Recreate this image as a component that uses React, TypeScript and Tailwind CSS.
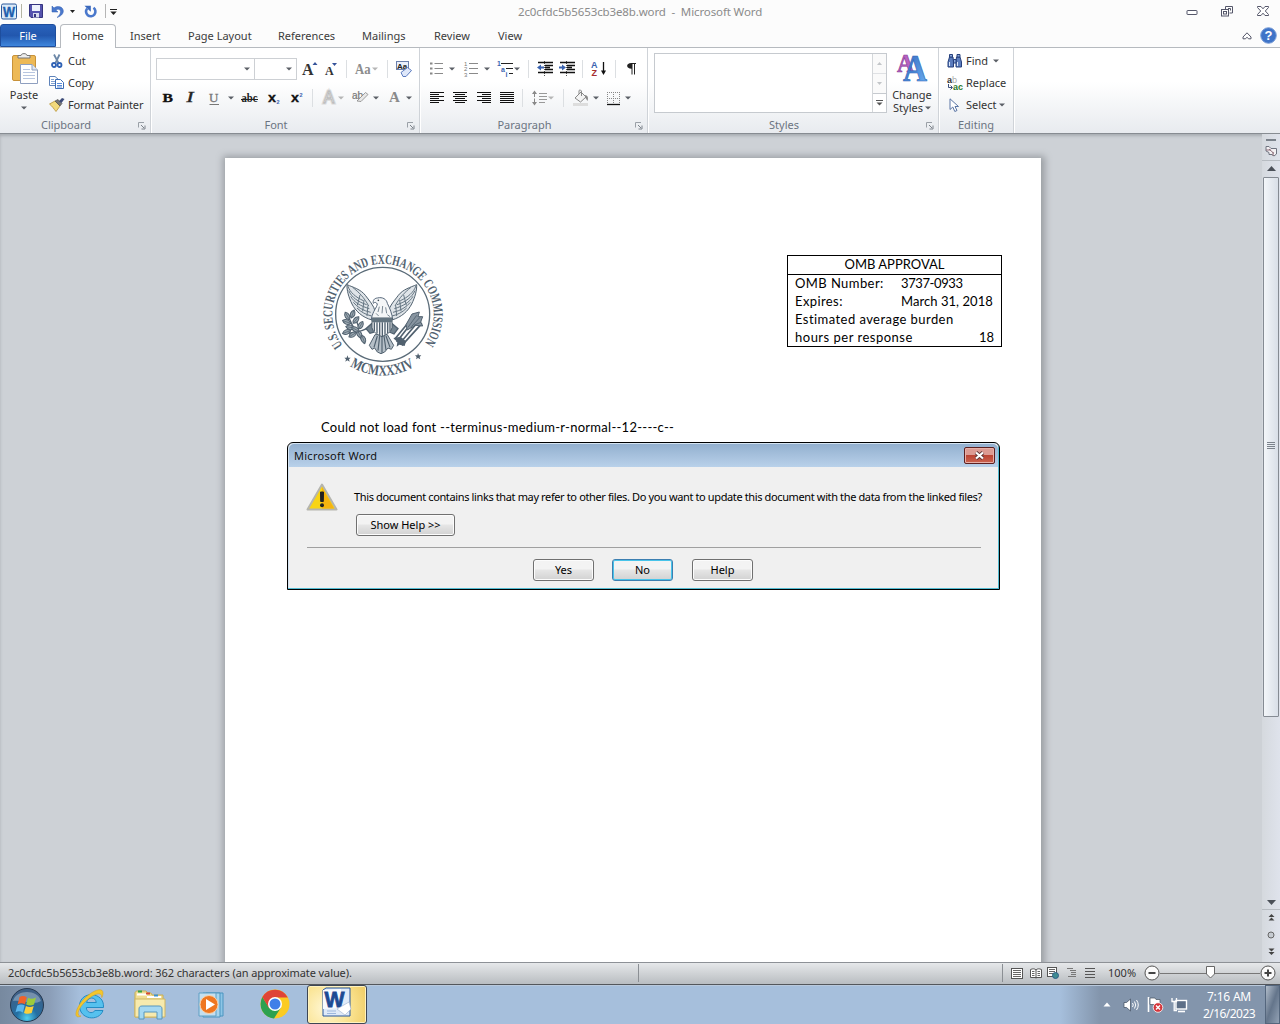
import React from "react";

type IconProps = { w: number; h: number; c?: string; children: React.ReactNode };

function Icon({ w, h, c = "", children }: IconProps) {
  return (
    <svg width={w} height={h} viewBox={`0 0 ${w} ${h}`} fill="none" className={`shrink-0 overflow-visible ${c}`}>
      {children}
    </svg>
  );
}

function Arrow({ c = "", fill = "#5b5f66" }: { c?: string; fill?: string }) {
  return (
    <Icon w={6} h={4} c={c}>
      <path d="M0 0.5H6L3 3.5Z" fill={fill} />
    </Icon>
  );
}

function Sep({ c = "" }: { c?: string }) {
  return <div className={`h-[18px] w-px shrink-0 bg-[#dcdfe2] ${c}`} />;
}

function Launcher({ c = "" }: { c?: string }) {
  return (
    <Icon w={8} h={8} c={c}>
      <path d="M0.5 5.5V0.5H6" stroke="#9aa0a7" />
      <path d="M3 3L6 6M7 3.5V7H3.5" stroke="#7c838b" />
    </Icon>
  );
}

function GroupLabel({ label, launcher = true }: { label: string; launcher?: boolean }) {
  return (
    <div className={`relative flex h-4 items-center justify-center text-[11px] text-[#6b7481] ${launcher ? "pr-[18px]" : ""}`}>
      <span>{label}</span>
      {launcher && <Launcher c="absolute top-[5px] right-[4px]" />}
    </div>
  );
}

const groupClass =
  "flex h-[85px] shrink-0 flex-col justify-between border-r border-[#cfd3d8] shadow-[1px_0_0_#fff]";

function TitleBar() {
  return (
    <div className="relative flex h-6 items-center bg-[#fcfcfc] pb-0.5">
      <Icon w={16} h={17} c="ml-px">
        <rect x="0.5" y="1" width="15" height="15" rx="1.5" fill="#dcebf8" stroke="#2c5a9c" />
        <text x="2" y="13.5" fontFamily="Liberation Sans" fontWeight="bold" fontSize="14" textLength="12" lengthAdjust="spacingAndGlyphs" fill="#1d5fae" stroke="#1d5fae" strokeWidth="0.4">W</text>
      </Icon>
      <div className="ml-1 h-3.5 w-px bg-[#b5b5a5]" />
      <Icon w={14} h={14} c="ml-[7px]">
        <path d="M0.5 0.5H13.5V13.5H2L0.5 12Z" fill="#5553ad" stroke="#35347f" />
        <rect x="3" y="1" width="8" height="6" fill="#eef2fb" />
        <rect x="4" y="9" width="6" height="4.5" fill="#d8dced" />
        <rect x="5" y="10" width="2" height="3" fill="#35347f" />
      </Icon>
      <Icon w={13} h={13} c="ml-2">
        <path d="M1 1V7H7L4.8 4.9C7 3.6 9.5 4 9.5 6.5C9.5 9 8 10.8 6 12.5C9.5 11.5 12.5 9 12.3 5.8C12 1.5 6.5 0.3 3 3Z" fill="#4a78cc" stroke="#2f5cb0" strokeWidth="0.5" />
      </Icon>
      <Icon w={5} h={3} c="ml-[6px]"><path d="M0 0H5L2.5 3Z" fill="#222" /></Icon>
      <Icon w={13} h={13} c="ml-[9px]">
        <path d="M3.2 3.5A4.7 4.7 0 1 0 9.5 2.8" stroke="#4a78cc" strokeWidth="2.6" />
        <path d="M0.5 0.8H6.8V6.8L4.8 4.9Z" fill="#3a68bc" />
      </Icon>
      <div className="ml-2 h-3.5 w-px bg-[#b5b5b5]" />
      <Icon w={7} h={6} c="ml-[4px] mt-0.5">
        <path d="M0 0.5H7" stroke="#222" /><path d="M0.3 2.5H6.7L3.5 6Z" fill="#222" />
      </Icon>
      <div className="absolute top-[4px] left-[518px] w-[246px] whitespace-pre text-[11.5px] leading-4 tracking-[-0.12px] text-[#8b8b8b]">
        2c0cfdc5b5653cb3e8b.word  -  Microsoft Word
      </div>
      <div className="mr-[11px] ml-auto flex items-center">
        <Icon w={12} h={6} c="mt-1"><rect x="1" y="0.5" width="10" height="4" rx="0.5" fill="#fff" stroke="#55576a" /></Icon>
        <Icon w={12} h={11} c="ml-[23px]">
          <path d="M4.5 3V0.5H11.5V7H8.5" stroke="#55576a" />
          <path d="M7 2.5H9.5V4.5" stroke="#55576a" />
          <rect x="0.5" y="3.5" width="7" height="6.5" fill="#fff" stroke="#55576a" />
          <rect x="2.5" y="5.5" width="3" height="2.5" stroke="#55576a" />
        </Icon>
        <Icon w={12} h={10} c="ml-6">
          <path d="M0.5 0.5H4L6 2.8L8 0.5H11.5V1.5L8.3 5L11.5 8.5V9.5H8L6 7.2L4 9.5H0.5V8.5L3.7 5L0.5 1.5Z" fill="#fff" stroke="#55576a" />
        </Icon>
      </div>
    </div>
  );
}

function Tabs() {
  const tab = "whitespace-nowrap pt-[3px] text-[11px] leading-[18px] text-[#3b3b3b]";
  return (
    <div className="relative flex h-6 border-b border-[#b6babf] bg-[#fcfcfc]">
      <div className="flex h-[23px] w-14 justify-center rounded-t-[3px] border border-[#1e4e9d] bg-linear-to-b from-[#2a63bb] via-[#2257ae] to-[#3f86dc] pt-px text-[11px] leading-5 text-white">
        File
      </div>
      <div className="ml-1 flex h-6 w-14 justify-center rounded-t-[4px] border border-b-0 border-[#b6babf] bg-white pt-[2px] text-[11px] leading-[18px] text-[#3b3b3b]">
        Home
      </div>
      <div className={`ml-[14px] w-[58px] ${tab}`}>Insert</div>
      <div className={`w-[90px] ${tab}`}>Page Layout</div>
      <div className={`w-[84px] ${tab}`}>References</div>
      <div className={`w-[72px] ${tab}`}>Mailings</div>
      <div className={`w-16 ${tab}`}>Review</div>
      <div className={tab}>View</div>
      <div className="mr-[3px] ml-auto flex items-center">
        <Icon w={10} h={8} c="mr-[8px]">
          <path d="M1 5L5 0.8L9 5V6.8H6.5L5 5.2L3.5 6.8H1Z" fill="#fff" stroke="#55576a" />
        </Icon>
        <Icon w={17} h={17} c="-mt-px">
          <circle cx="8.5" cy="8.5" r="7.8" fill="#3f74c8" stroke="#7c9fd8" />
          <text x="8.5" y="13" textAnchor="middle" fontFamily="Liberation Sans" fontWeight="bold" fontSize="13" fill="#fff">?</text>
        </Icon>
      </div>
    </div>
  );
}

function ClipboardGroup() {
  return (
    <div className={`w-[151px] ${groupClass}`}>
      <div className="flex">
        <div className="ml-[10px] flex w-7 flex-col items-center pt-[5px]">
          <Icon w={29} h={31}>
            <rect x="2.5" y="2.5" width="23" height="25" rx="1.5" fill="#edb956" stroke="#c8923a" />
            <path d="M8 5V2.5H11C11 0 17 0 17 2.5H20V5Z" fill="#eee" stroke="#777" />
            <path d="M10.5 11.5H22L27.5 17V30.5H10.5Z" fill="#fff" stroke="#8e9fbf" />
            <path d="M22 11.5V17H27.5" fill="#dde6f5" stroke="#8e9fbf" />
            <path d="M13 16.5H20M13 19.5H25M13 22.5H25M13 25.5H25" stroke="#b8c6e0" />
          </Icon>
          <span className="mt-[3px] text-[11px] leading-4 text-[#333]">Paste</span>
          <Arrow c="mt-[3px]" />
        </div>
        <div className="ml-[11px] flex flex-col text-[11px] leading-[22px] text-[#333]">
          <div className="mt-[2px] flex h-[22px] items-center">
            <Icon w={12} h={14} c="mr-[5px] ml-0.5">
              <path d="M3 0.5L7.5 9M8.5 0.5L4.5 9" stroke="#6d88a8" strokeWidth="1.8" />
              <circle cx="3" cy="11" r="2" stroke="#2f62b5" strokeWidth="1.8" />
              <circle cx="8.5" cy="11" r="2" stroke="#2f62b5" strokeWidth="1.8" />
            </Icon>
            Cut
          </div>
          <div className="flex h-[22px] items-center">
            <Icon w={16} h={14} c="mr-[3px]">
              <path d="M0.5 0.5H6L9.5 3.5V9.5H0.5Z" fill="#fff" stroke="#5f83ba" />
              <path d="M2 3.5H5M2 5.5H6M2 7.5H6" stroke="#7fa0d0" />
              <path d="M6.5 3.5H11.5L14.5 6.5V12.5H6.5Z" fill="#fff" stroke="#3b6cb4" />
              <path d="M8 7.5H13M8 9.5H13M8 11H13" stroke="#5b8cd8" />
            </Icon>
            Copy
          </div>
          <div className="flex h-[22px] items-center tracking-[-0.15px]">
            <Icon w={16} h={14} c="mr-[3px]">
              <path d="M0.5 6L6 3L11 8L7 13.5C5 11 3 8 0.5 6Z" fill="#f3da7c" stroke="#b8943a" strokeWidth="0.8" />
              <path d="M6 3L9 1.5L13 5.5L11 8Z" fill="#777" stroke="#444" strokeWidth="0.6" />
              <path d="M10 3.2L13 0L15.5 1L12.5 5Z" fill="#3d4b78" />
            </Icon>
            Format Painter
          </div>
        </div>
      </div>
      <GroupLabel label="Clipboard" />
    </div>
  );
}

function Glyph({ w, c, children }: { w: number; c: string; children: React.ReactNode }) {
  return (
    <Icon w={w} h={18} c={c}>
      {children}
    </Icon>
  );
}

const serif = { fontFamily: "Liberation Serif", fontWeight: "bold" };

function FontGroup() {
  return (
    <div className={`w-[269px] ${groupClass}`}>
      <div>
        <div className="mt-[10px] ml-[5px] flex h-[22px] items-center">
          <div className="flex h-[22px] w-[99px] items-center justify-end border border-[#cdd0d4] bg-white pr-1"><Arrow /></div>
          <div className="flex h-[22px] w-[42px] items-center justify-end border border-l-0 border-[#cdd0d4] bg-white pr-1"><Arrow /></div>
          <Glyph w={16} c="ml-[5px]">
            <text x="0" y="15" {...serif} fontSize="16" fill="#333">A</text>
            <path d="M10.5 5L13 2L15.5 5Z" fill="#35539a" />
          </Glyph>
          <Glyph w={13} c="ml-[7px]">
            <text x="0" y="15" {...serif} fontSize="12" fill="#333">A</text>
            <path d="M7 3H12L9.5 6Z" fill="#35539a" />
          </Glyph>
          <Sep c="ml-[8px]" />
          <Glyph w={17} c="ml-2">
            <text x="0" y="14" fontFamily="Liberation Serif" fontSize="14" fontWeight="bold" textLength="15.5" lengthAdjust="spacingAndGlyphs" fill="#8d8d8d">Aa</text>
          </Glyph>
          <Arrow c="ml-0" fill="#b5b5b5" />
          <Sep c="ml-[9px]" />
          <Glyph w={17} c="ml-2">
            <rect x="0.5" y="1.5" width="12" height="8" fill="#eaf0fb" stroke="#6a80ad" />
            <text x="1" y="8.5" fontFamily="Liberation Sans" fontSize="8" fontWeight="bold" fill="#222">Aa</text>
            <path d="M5 12.5L11.5 7.5L15.5 10.5L10 16.5H7Z" fill="#dfe8fa" stroke="#5c7cc0" />
          </Glyph>
        </div>
        <div className="mt-[9px] flex h-[18px] items-center">
          <Glyph w={11} c="ml-[11px]"><text x="0.5" y="13" {...serif} fontSize="13.5" textLength="10.5" lengthAdjust="spacingAndGlyphs" fill="#111" stroke="#111" strokeWidth="0.3">B</text></Glyph>
          <Glyph w={11} c="ml-[12px]"><text x="1.5" y="13" fontFamily="Liberation Serif" fontStyle="italic" fontSize="14" textLength="7" lengthAdjust="spacingAndGlyphs" fill="#222" stroke="#222" strokeWidth="0.4">I</text></Glyph>
          <Glyph w={11} c="ml-[13px]"><text x="0" y="13" fontFamily="Liberation Serif" fontSize="13" fill="#777" stroke="#777" strokeWidth="0.3">U</text><path d="M0.5 15.5H10" stroke="#777" /></Glyph>
          <Arrow c="ml-[8px]" />
          <Glyph w={18} c="ml-[7px]"><text x="0.5" y="13" {...serif} fontSize="12" textLength="16" lengthAdjust="spacingAndGlyphs" fill="#222">abc</text><path d="M0 10.5H17" stroke="#222" /></Glyph>
          <Glyph w={14} c="ml-2"><text x="1" y="13" fontFamily="Liberation Sans" fontWeight="bold" fontSize="12" textLength="8" lengthAdjust="spacingAndGlyphs" fill="#111" stroke="#111" strokeWidth="0.3">x</text><text x="9.5" y="15" fontFamily="Liberation Sans" fontWeight="bold" fontSize="5.5" fill="#3a63b0">2</text></Glyph>
          <Glyph w={14} c="ml-[9px]"><text x="1" y="13" fontFamily="Liberation Sans" fontWeight="bold" fontSize="12" textLength="8" lengthAdjust="spacingAndGlyphs" fill="#111" stroke="#111" strokeWidth="0.3">x</text><text x="9.5" y="7.5" fontFamily="Liberation Sans" fontWeight="bold" fontSize="5.5" fill="#3a63b0">2</text></Glyph>
          <Sep c="ml-2" />
          <Glyph w={16} c="ml-[9px]"><text x="1.5" y="14" fontFamily="Liberation Sans" fontSize="16" fill="#fff" stroke="#dcdcdc" strokeWidth="3">A</text><text x="1.5" y="14" fontFamily="Liberation Sans" fontSize="16" fill="#fff" stroke="#b5b5b5" strokeWidth="0.8">A</text></Glyph>
          <Arrow c="ml-0" fill="#b5b5b5" />
          <Glyph w={17} c="ml-2"><text x="0" y="9.5" fontFamily="Liberation Sans" fontSize="10" fill="#777" stroke="#777" strokeWidth="0.2">ab</text><path d="M5 12L13.5 3.5L16 5.5L9 12.5Z" fill="#e8e8e8" stroke="#888" strokeWidth="0.8" /></Glyph>
          <Arrow c="ml-[4px]" />
          <Glyph w={12} c="ml-[10px]"><text x="0" y="12.5" {...serif} fontSize="15" fill="#8a8a8a">A</text></Glyph>
          <Arrow c="ml-[5px]" />
        </div>
      </div>
      <GroupLabel label="Font" />
    </div>
  );
}

function Align({ d, c }: { d: string; c: string }) {
  return <Icon w={15} h={12} c={c}><path d={d} stroke="#111" /></Icon>;
}

function ParagraphGroup() {
  return (
    <div className={`w-[228px] ${groupClass}`}>
      <div>
        <div className="mt-3 ml-[10px] flex h-[18px] items-center">
          <Glyph w={14} c=""><path d="M4.5 3.5H13M4.5 8.5H13M4.5 13.5H13" stroke="#8a8a8a" /><path d="M0 3.5H2.5M0 8.5H2.5M0 13.5H2.5" stroke="#888" strokeWidth="2.2" /></Glyph>
          <Arrow c="ml-[5px]" />
          <Glyph w={14} c="ml-[9px]"><path d="M5 3.5H14M5 8.5H14M5 13.5H14" stroke="#8a8a8a" /><g fontFamily="Liberation Sans" fontSize="6" fill="#777"><text x="0" y="5.5">1</text><text x="0" y="11">2</text><text x="0" y="16.5">3</text></g></Glyph>
          <Arrow c="ml-[6px]" />
          <Glyph w={17} c="ml-[7px]"><path d="M4 3.5H16M9 8.5H16M12 13.5H16" stroke="#222" /><g fontFamily="Liberation Sans" fontSize="7" fontWeight="bold" fill="#3a63b0"><text x="0" y="6">1</text><text x="4" y="11.5">a</text><text x="8.5" y="17">i</text></g></Glyph>
          <Arrow />
          <Sep c="ml-[8px]" />
          <Glyph w={16} c="ml-[8px]"><path d="M7.5 1V16" stroke="#555" strokeDasharray="1 1" /><path d="M1 2.5H16M8 5.5H16M8 7.5H13M8 9.5H16M1 12.5H16" stroke="#111" strokeWidth="1.3" /><path d="M0 7.5L4 4.5V6.5H7V8.5H4V10.5Z" fill="#3a63b0" /></Glyph>
          <Glyph w={16} c="ml-[6px]"><path d="M7.5 1V16" stroke="#555" strokeDasharray="1 1" /><path d="M1 2.5H16M8 5.5H16M8 7.5H13M8 9.5H16M1 12.5H16" stroke="#111" strokeWidth="1.3" /><path d="M7 7.5L3 4.5V6.5H0V8.5H3V10.5Z" fill="#3a63b0" /></Glyph>
          <Sep c="ml-[7px]" />
          <Glyph w={15} c="ml-2"><g fontFamily="Liberation Sans" fontSize="9" fontWeight="bold"><text x="0" y="8" fill="#3a63b0">A</text><text x="0.5" y="16" fill="#a62f2f">Z</text></g><path d="M12.5 2V13" stroke="#111" strokeWidth="1.3" /><path d="M10 10.5H15L12.5 15Z" fill="#111" /></Glyph>
          <Sep c="ml-[9px]" />
          <Glyph w={11} c="ml-[10px]"><path d="M5.5 3.5H10M6 3V14.5M8.5 3V14.5" stroke="#222" /><path d="M6 3C-0.5 2.5 -0.5 9 6 8.7Z" fill="#222" /></Glyph>
        </div>
        <div className="mt-[11px] ml-[9px] flex h-[18px] items-center">
          <Align c="" d="M1 0.5H15M1 2.5H10M1 4.5H15M1 6.5H10M1 8.5H15M1 10.5H10" />
          <Align c="ml-[9px]" d="M0 0.5H14M2 2.5H12M0 4.5H14M2 6.5H12M0 8.5H14M2 10.5H12" />
          <Align c="ml-[9px]" d="M0 0.5H14M5 2.5H14M0 4.5H14M5 6.5H14M0 8.5H14M5 10.5H14" />
          <Align c="ml-2" d="M0 0.5H14M0 2.5H14M0 4.5H14M0 6.5H14M0 8.5H14M0 10.5H14" />
          <Sep c="ml-[7px]" />
          <Glyph w={15} c="ml-[9px]"><path d="M7 4.5H15M7 7.5H15M7 10.5H15M7 13.5H13" stroke="#999" /><path d="M2.5 3V15" stroke="#888" strokeDasharray="5 1.5" /><path d="M0 5L2.5 1.5L5 5ZM0 13L2.5 16.5L5 13Z" fill="#888" /></Glyph>
          <Arrow c="ml-px" fill="#b5b5b5" />
          <Sep c="ml-[9px]" />
          <Glyph w={16} c="ml-[9px]"><path d="M2 9L8 3L13 8L7.5 13Z" fill="#f3f3f3" stroke="#888" /><path d="M6 5V1.5C7 0.5 8.5 1 8.5 3V7" stroke="#888" /><path d="M12 6C15 6.5 15.5 9 14.5 12L12.5 9Z" fill="#888" /><path d="M0 15.5H15" stroke="#ddd" strokeWidth="3" /></Glyph>
          <Arrow c="ml-[4px]" />
          <Glyph w={14} c="ml-[8px]"><path d="M0.5 3V15M6.5 3V15M12.5 3V15M0 3.5H13M0 9.5H13" stroke="#888" strokeDasharray="1 1" /><path d="M0 15.5H13" stroke="#111" strokeWidth="1.3" /></Glyph>
          <Arrow c="ml-[4px]" />
        </div>
      </div>
      <GroupLabel label="Paragraph" />
    </div>
  );
}

function StylesGroup() {
  return (
    <div className={`w-[291px] ${groupClass}`}>
      <div className="flex">
        <div className="mt-[5px] ml-[6px] flex h-[60px] w-[233px] border border-[#c6cacf] bg-white">
          <div className="ml-auto flex w-[14px] flex-col border-l border-[#d4d7da]">
            <div className="flex h-5 items-center justify-center border-b border-[#dfe1e4] bg-[#fafafa]">
              <Icon w={5} h={3}><path d="M0 3H5L2.5 0Z" fill="#c2c5c8" /></Icon>
            </div>
            <div className="flex h-5 items-center justify-center border-b border-[#c6cacf] bg-[#fafafa]">
              <Icon w={5} h={3}><path d="M0 0H5L2.5 3Z" fill="#c2c5c8" /></Icon>
            </div>
            <div className="flex flex-1 items-center justify-center">
              <Icon w={7} h={6}><path d="M0 0.5H7" stroke="#555" /><path d="M0.5 2.5H6.5L3.5 5.5Z" fill="#555" /></Icon>
            </div>
          </div>
        </div>
        <div className="ml-[4px] flex w-[42px] flex-col items-center pt-[6px] text-[11px] leading-[13px] text-[#333]">
          <Icon w={30} h={28}>
            <defs>
              <linearGradient id="styleBlue" x1="0" y1="0" x2="1" y2="1"><stop offset="0.2" stopColor="#3c70c4" /><stop offset="1" stopColor="#6cb4f6" /></linearGradient>
            </defs>
            <text x="0" y="18" fontFamily="Liberation Serif" fontWeight="bold" fontSize="26" textLength="17" lengthAdjust="spacingAndGlyphs" fill="#b763c0" stroke="#8c3f9c" strokeWidth="0.7">A</text>
            <text x="6" y="27" fontFamily="Liberation Serif" fontWeight="bold" fontSize="37" textLength="24" lengthAdjust="spacingAndGlyphs" fill="url(#styleBlue)" stroke="#2e66b8" strokeWidth="0.7">A</text>
          </Icon>
          <span className="mt-[6px]">Change</span>
          <span className="flex items-center gap-[2px]">Styles<Arrow /></span>
        </div>
      </div>
      <GroupLabel label="Styles" />
    </div>
  );
}

function EditingGroup() {
  const row = "flex h-[22px] items-center";
  return (
    <div className={`w-[75px] ${groupClass}`}>
      <div className="mt-[2px] ml-2 text-[11px] text-[#333]">
        <div className={row}>
          <Icon w={16} h={14} c="mr-[3px]">
            <path d="M2.5 3L1 8V13H6.5V8L6 3ZM9.5 3L9 8V13H14.5V8L13 3Z" fill="#5b7cbd" stroke="#27407c" />
            <path d="M2.5 0.5H5.5V3H2.5ZM10 0.5H13V3H10ZM6.5 5.5H9V9H6.5Z" fill="#8da9dc" stroke="#27407c" />
            <path d="M2.5 8V12M10.5 8V12" stroke="#dbe7fb" />
          </Icon>
          Find<Arrow c="ml-[5px]" />
        </div>
        <div className={row}>
          <Icon w={17} h={15} c="mr-[2px]">
            <g fontFamily="Liberation Sans" fontWeight="bold" fontSize="9"><text x="0" y="6.5" fill="#333">a</text><text x="5" y="6.5" fill="#aaa" fontWeight="normal">b</text><text x="6" y="14" fill="#2a7a2a">ac</text></g>
            <path d="M1.5 8V11.5H5M3.5 9.5L5.5 11.5L3.5 13.5" stroke="#3a4f7a" />
          </Icon>
          Replace
        </div>
        <div className={row}>
          <Icon w={12} h={15} c="mr-[5px] ml-0.5">
            <path d="M1 0.8V11.5L3.8 9L5.8 13.5L8 12.5L6 8.5H9.5Z" fill="#fff" stroke="#5a75a5" />
          </Icon>
          <span className="w-[31px]">Select</span><Arrow c="ml-[2px]" />
        </div>
      </div>
      <GroupLabel label="Editing" launcher={false} />
    </div>
  );
}

function Ribbon() {
  return (
    <div className="flex h-[86px] border-b border-[#878c92] bg-linear-to-b from-white from-40% to-[#e8ebef]">
      <ClipboardGroup />
      <FontGroup />
      <ParagraphGroup />
      <StylesGroup />
      <EditingGroup />
    </div>
  );
}

const wingFeathers = [
  "M143 137C150 158 168 172 190 182",
  "M146 152C155 172 175 186 200 194",
  "M152 169C163 188 182 198 208 206",
  "M160 187C172 202 190 212 212 217",
  "M171 204C184 217 198 224 215 228",
  "M158 142C178 158 192 172 206 198",
  "M180 165L172 196M192 180L188 214M204 196L201 228",
];

function Wing() {
  return (
    <g>
      <path d="M141 134C140 150 146 172 156 192C166 212 186 232 216 240L226 216C222 196 206 180 196 166C182 148 160 142 141 134Z" fill="#dfe4e8" stroke="#4f606e" strokeWidth="3" />
      {wingFeathers.map((d) => <path key={d} d={d} stroke="#647582" strokeWidth="3" />)}
    </g>
  );
}

const leaves = [
  [142, 228, 60], [158, 222, 110], [140, 246, 20], [168, 240, 130], [150, 262, 10],
  [140, 276, 160], [158, 284, 150], [182, 256, 120], [178, 282, 60], [190, 298, 70], [166, 268, 30],
];

function Seal() {
  return (
    <svg width="160" height="150" viewBox="0 0 480 450" fill="none" className="mt-[82px] ml-[75px] shrink-0">
      <defs>
        <path id="sealTop" d="M128.5 316.5A152 152 0 1 1 370.5 315" />
        <path id="sealBottom" d="M150 378A184 184 0 0 0 346 378" />
      </defs>
      <circle cx="248" cy="223" r="141" stroke="#5a6b78" strokeWidth="4" />
      <g fontFamily="Liberation Serif" fontWeight="bold" fill="#51616f">
        <text fontSize="41" textLength="668" lengthAdjust="spacingAndGlyphs"><textPath href="#sealTop" textLength="668" lengthAdjust="spacingAndGlyphs">U.S. SECURITIES AND EXCHANGE COMMISSION</textPath></text>
        <text fontSize="45" textLength="204" lengthAdjust="spacingAndGlyphs"><textPath href="#sealBottom" textLength="204" lengthAdjust="spacingAndGlyphs">MCMXXXIV</textPath></text>
      </g>
      <path d="M142 346L145 353L152 353L147 358L149 365L142 361L136 365L138 358L133 353L140 353Z" fill="#51616f" />
      <path d="M354 339L357 346L364 346L359 351L361 358L354 354L348 358L350 351L345 346L352 346Z" fill="#51616f" />
      <Wing />
      <g transform="translate(491 0) scale(-1 1)"><Wing /></g>
      <path d="M214 236C220 210 230 204 232 192C228 186 224 186 220 190C218 182 222 175 232 174C248 170 260 178 262 190C270 205 276 222 278 238Z" fill="#f4f6f7" stroke="#56677a" strokeWidth="3" />
      <circle cx="235" cy="181" r="2.5" fill="#34424e" />
      <path d="M238 200L234 216M248 198L246 220M257 202L260 220M228 220L236 228M262 224L270 230" stroke="#7b8994" strokeWidth="3" />
      <path d="M225 284L208 316L216 328L224 324L232 336L243 341L254 336L264 324L274 328L281 316L262 284Z" fill="#b5bfc7" stroke="#51616f" strokeWidth="3" />
      <path d="M232 288L222 322M239 288L234 332M246 288V338M252 288L258 330M258 288L270 322" stroke="#4f606e" strokeWidth="3.5" />
      <path d="M216 250L198 266L210 280L222 276M275 250L294 266L282 282L268 276" fill="#73838f" stroke="#51616f" strokeWidth="4" />
      <path d="M216 234H276V262C274 276 262 282 246 290C230 282 218 276 216 262Z" fill="#f6f8f9" stroke="#4a5a67" strokeWidth="3" />
      <path d="M216 234H276V247H216Z" fill="#63747f" />
      <path d="M223 247V274M231 247V280M239 247V285M247 247V288M255 247V284M263 247V279M270 247V273" stroke="#51616f" strokeWidth="4" />
      <path d="M144 222C152 260 176 284 194 312M200 266C180 276 160 280 134 280M166 232L176 262" stroke="#51616f" strokeWidth="4" />
      {leaves.map(([x, y, r]) => (
        <g key={`${x}-${y}`} transform={`translate(${x} ${y}) rotate(${r})`}>
          <path d="M-13 0C-6 -9 6 -9 13 0C6 9 -6 9 -13 0Z" fill="#9ba8b1" stroke="#51616f" strokeWidth="3" />
          <path d="M-10 0H10" stroke="#51616f" strokeWidth="2" />
        </g>
      ))}
      <path d="M290 306L352 226M298 312L362 236M306 316L366 250M284 298L338 232" stroke="#51616f" strokeWidth="5" />
      <path d="M336 222L358 216L354 230L368 230L362 246L368 258L346 256L322 270L318 254Z" fill="#8794a0" stroke="#51616f" strokeWidth="3" />
      <path d="M324 262L350 226M334 260L360 232M342 256L364 246" stroke="#51616f" strokeWidth="2.5" />
      <path d="M280 294L302 290L318 304L314 318L298 314L290 320L292 306Z" fill="#51616f" />
    </svg>
  );
}

function OmbBox() {
  return (
    <div className="mt-[97px] ml-[327px] h-[92px] w-[215px] border border-black text-[13px] whitespace-nowrap text-black">
      <div className="h-[19px] border-b border-black text-center leading-[17px]">OMB APPROVAL</div>
      <div className="-mt-px leading-[18px]">
        <div className="flex pl-[7px]"><span className="w-[106px] tracking-[0.42px]">OMB Number:</span><span className="tracking-[-0.4px]">3737-0933</span></div>
        <div className="flex pl-[7px]"><span className="w-[106px] tracking-[0.4px]">Expires:</span><span className="tracking-[0.05px]">March 31, 2018</span></div>
        <div className="pl-[7px] tracking-[0.44px]">Estimated average burden</div>
        <div className="flex justify-between pr-[7px] pl-[7px]"><span className="tracking-[0.5px]">hours per response</span><span>18</span></div>
      </div>
    </div>
  );
}

function Dialog() {
  const button =
    "flex h-[22px] items-center justify-center rounded-[3px] border bg-linear-to-b from-[#f3f3f3] from-45% via-[#e6e6e6] via-50% to-[#d2d2d2] text-[11px] text-black";
  const plain = "border-[#707070] shadow-[inset_0_0_0_1px_#fcfcfc]";
  return (
    <div className="absolute top-[308px] left-[287px] flex h-[148px] w-[713px] flex-col rounded-t-[6px] border border-black bg-[#f0f0f0] shadow-[inset_-1px_-1px_0_#54bcd2,inset_1px_1px_0_#d5e4f2]">
      <div className="mx-px mt-px flex h-[23px] items-center rounded-t-[5px] bg-linear-to-b from-[#93b0cf] to-[#b9d1ea] pr-[3px] pl-[5px]">
        <span className="pt-px text-[11px] tracking-[0.28px] text-[#111]">Microsoft Word</span>
        <div className="ml-auto flex h-[17px] w-[31px] items-center justify-center rounded-[2px] border border-[#5d2020] bg-linear-to-b from-[#dc9b93] from-45% via-[#bb4434] via-50% to-[#cc6450] shadow-[inset_0_0_0_1px_#e8b0a8]">
          <Icon w={11} h={9}>
            <path d="M2 1.5L9 7.5M9 1.5L2 7.5" stroke="#5a3535" strokeWidth="3.8" />
            <path d="M2 1.5L9 7.5M9 1.5L2 7.5" stroke="#fff" strokeWidth="2.2" />
          </Icon>
        </div>
      </div>
      <div className="flex">
        <Icon w={32} h={28} c="mt-[16px] ml-[18px]">
          <path d="M16 1.5L30.5 26.5H1.5Z" fill="#f8d415" stroke="#b5b5ae" strokeWidth="2" strokeLinejoin="round" />
          <path d="M16 4L28 25.5H16Z" fill="#f6b40e" />
          <path d="M14.5 9H17.5L17.3 18.5H14.7Z" fill="#222" stroke="#222" />
          <circle cx="16" cy="22.3" r="2" fill="#222" />
        </Icon>
        <div className="ml-4">
          <div className="mt-[21px] h-[18px] text-[11px] leading-[18px] tracking-[-0.374px] whitespace-nowrap text-black">
            This document contains links that may refer to other files. Do you want to update this document with the data from the linked files?
          </div>
          <div className={`mt-[8px] ml-[2px] w-[99px] ${plain} ${button}`}>Show Help &gt;&gt;</div>
        </div>
      </div>
      <div className="mt-[11px] mr-[18px] ml-[19px] h-px bg-[#a0a0a0]" />
      <div className="mt-[11px] ml-[245px] flex">
        <div className={`w-[61px] ${plain} ${button}`}>Yes</div>
        <div className={`ml-[18px] w-[61px] border-[#3c7fb1] shadow-[inset_0_0_0_1px_#48c4ea] ${button}`}>No</div>
        <div className={`ml-[19px] w-[61px] ${plain} ${button}`}>Help</div>
      </div>
    </div>
  );
}

function ScrollBar() {
  return (
    <div className="ml-auto flex h-full w-[18px] flex-col items-center bg-linear-to-r from-[#d5d9de] to-[#dfe3ec]">
      <Icon w={10} h={2} c="mt-[5px]"><rect width="10" height="2" fill="#7b828b" /></Icon>
      <Icon w={13} h={12} c="mt-1">
        <path d="M1 1.5H4L6 3.5H11.5V9L9 11L7 9.5H4V7.5L1 6Z" fill="#f4f0f3" stroke="#6f7480" />
        <path d="M4 4L9 8.5M8 7V11M1 5H6" stroke="#8d6f7a" />
      </Icon>
      <div className="mt-[3px] h-px w-full bg-[#b6bbc1]" />
      <Icon w={9} h={5} c="mt-[5px]"><path d="M0 5H9L4.5 0Z" fill="#4b5058" /></Icon>
      <div className="mt-[6px] flex h-[540px] w-4 items-center justify-center rounded-[1px] border border-[#858b93] bg-linear-to-r from-[#f3f6f9] to-[#d9dfe8] pb-[3px]">
        <Icon w={8} h={7}><path d="M0 0.5H8M0 2.5H8M0 4.5H8M0 6.5H8" stroke="#7c838c" /></Icon>
      </div>
      <Icon w={9} h={5} c="mt-auto"><path d="M0 0H9L4.5 5Z" fill="#4b5058" /></Icon>
      <div className="mt-[4px] h-px w-full bg-[#b6bbc1]" />
      <Icon w={7} h={7} c="mt-[4px]"><path d="M0.5 3H6.5L3.5 0ZM0.5 6.5H6.5L3.5 3.5Z" fill="#444" /></Icon>
      <Icon w={8} h={8} c="mt-[10px]"><circle cx="4" cy="4" r="3" fill="#c6cbd1" stroke="#666" /></Icon>
      <Icon w={7} h={7} c="mt-[9px] mb-[7px]"><path d="M0.5 0.5H6.5L3.5 3.5ZM0.5 4H6.5L3.5 7Z" fill="#444" /></Icon>
    </div>
  );
}

function DocumentArea() {
  return (
    <div className="relative flex h-[828px] overflow-hidden bg-[#cdd1d6] shadow-[inset_0_2px_3px_#a9adb2]">
      <div className="mt-6 ml-[225px] h-[820px] w-[816px] bg-white font-['Lato',sans-serif] shadow-[1px_1px_7px_3px_#9a9ea3]">
        <div className="flex h-[260px]">
          <Seal />
          <OmbBox />
        </div>
        <div className="ml-24 text-[13px] leading-[18px] tracking-[0.27px] text-black">Could not load font --terminus-medium-r-normal--12----c--</div>
      </div>
      <ScrollBar />
      <Dialog />
    </div>
  );
}

function StatusBar() {
  return (
    <div className="flex h-[23px] items-center border-t border-b border-t-[#8d9196] border-b-[#53575c] bg-linear-to-b from-[#e6e8ea] to-[#b9bdc1] pb-px text-[11px] text-[#333]">
      <span className="w-[630px] pl-2 tracking-[-0.1px] whitespace-nowrap">2c0cfdc5b5653cb3e8b.word: 362 characters (an approximate value).</span>
      <div className="ml-2 h-[18px] w-px bg-[#8b8f94]" />
      <div className="ml-[363px] h-[18px] w-px bg-[#8b8f94]" />
      <Icon w={12} h={11} c="ml-2"><rect x="0.5" y="0.5" width="11" height="10" fill="#fff" stroke="#555" /><path d="M2 2.5H10M2 4.5H10M2 6.5H10M2 8.5H10" stroke="#666" /></Icon>
      <Icon w={12} h={11} c="ml-[7px]"><path d="M0.5 1.5C3 0.5 4.5 0.5 6 2C7.5 0.5 9 0.5 11.5 1.5V9.5H0.5ZM6 2V10.5" fill="#fff" stroke="#555" /><path d="M2 3.5H4.5M2 5.5H4.5M2 7.5H4.5M7.5 3.5H10M7.5 5.5H10M7.5 7.5H10" stroke="#666" /></Icon>
      <Icon w={12} h={12} c="ml-[5px]"><rect x="0.5" y="0.5" width="9" height="9" fill="#fff" stroke="#555" /><path d="M2 2.5H8M2 4.5H8M2 6.5H6" stroke="#666" /><circle cx="8.5" cy="8.5" r="3" fill="#418c91" stroke="#2b5f88" /></Icon>
      <Icon w={10} h={10} c="ml-2"><path d="M0 0.5H6M3 2.5H9M4 4.5H9M4 6.5H9M1 8.5H9" stroke="#777" /></Icon>
      <Icon w={10} h={10} c="ml-[8px]"><path d="M0 0.5H10M0 3.5H10M0 6.5H10M0 9.5H10" stroke="#555" /></Icon>
      <span className="ml-[13px] w-[36px] whitespace-nowrap">100%</span>
      <Icon w={16} h={16}><circle cx="8" cy="8" r="7" fill="#fafafa" stroke="#555" /><path d="M4.5 8H11.5" stroke="#444" strokeWidth="2" /></Icon>
      <div className="relative h-px w-[100px] bg-[#777]">
        <Icon w={9} h={13} c="absolute -top-[7px] left-[46px]"><path d="M0.5 0.5H8.5V8L4.5 12L0.5 8Z" fill="#fff" stroke="#666" /></Icon>
      </div>
      <Icon w={16} h={16}><circle cx="8" cy="8" r="7" fill="#fafafa" stroke="#555" /><path d="M4.5 8H11.5M8 4.5V11.5" stroke="#444" strokeWidth="2" /></Icon>
    </div>
  );
}

function StartOrb() {
  return (
    <Icon w={36} h={36} c="ml-[9px]">
      <defs>
        <radialGradient id="orb" cx="50%" cy="90%" r="80%"><stop offset="0" stopColor="#4fd0f0" /><stop offset="0.4" stopColor="#246fa3" /><stop offset="1" stopColor="#3e5f86" /></radialGradient>
      </defs>
      <circle cx="18" cy="18" r="16.5" fill="url(#orb)" stroke="#26384f" />
      <path d="M4 14C7 2 29 2 32 14C24 19 12 12 4 14Z" fill="#fff" fillOpacity="0.3" />
      <path d="M10.5 10C13 8.5 15.5 8.8 17.8 10.2L16 17.2C13.5 16 11.2 16 8.7 17.2Z" fill="#f0622a" />
      <path d="M19 10.8C21.5 12 24 12 27 10.5L25 17.5C22.5 19 19.5 18.7 17.2 17.6Z" fill="#9ccb3c" />
      <path d="M8.3 18.6C10.8 17.3 13.3 17.3 15.7 18.5L13.8 25.4C11.5 24 9 24 6.5 25.2Z" fill="#5bb6ee" />
      <path d="M16.9 19C19.5 20.2 22 20.2 24.7 18.9L22.7 26C20 27.2 17.5 27 15 25.9Z" fill="#fbcf3b" />
    </Icon>
  );
}

function Taskbar() {
  return (
    <div className="flex h-[39px] items-center bg-[linear-gradient(to_right,#77899f_0px,#8b9eb8_50px,#a6bfdc_80px,#a6bfdc_1060px,#8395ac_1100px,#8395ac_100%)] shadow-[inset_0_1px_0_#b9c9dc]">
      <StartOrb />
      <Icon w={32} h={34} c="-mt-px ml-[29px]">
        <path d="M29.5 20C30.5 5 7 3 5.5 18C5 33 25 35 29 23.5H21C18 27.5 12.5 25.5 12.3 20.5H29.5ZM12.6 15.5C14 9.5 21.5 9.5 22.3 15.5Z" fill="#56c1ee" stroke="#248cc4" strokeWidth="1" fillRule="evenodd" />
        <path d="M7 29C-1 33 1 22 9 13C17 4 29 -1 29 6C29 8 28.3 9.5 27.8 10.5C28 4 20 7 13 13C5 20 1 29 7 29Z" fill="#f4c62c" stroke="#d49f16" strokeWidth="0.5" />
      </Icon>
      <Icon w={33} h={32} c="ml-[28px]">
        <path d="M1 4C1 3 2 2 3 2H12L14 4H17L18 6H29V28H1Z" fill="#f0dd92" stroke="#c8ad55" />
        <path d="M3 5.5H13M13 8H27" stroke="#fff" strokeWidth="2" />
        <path d="M4 2.5H8" stroke="#33a24a" strokeWidth="2" /><path d="M12 4.5H16" stroke="#d44b34" strokeWidth="2" /><path d="M20 6.5H24" stroke="#3c91ce" strokeWidth="2" />
        <path d="M1 10H31V28H1Z" fill="#f7eaae" stroke="#d0b662" />
        <path d="M5 30V20C5 18 6 17 8 17H25C27 17 28 18 28 20V30H23V23H10V30Z" fill="#a5d8f2" stroke="#5796bd" />
      </Icon>
      <Icon w={30} h={28} c="ml-[31px]">
        <path d="M8 2H25V25H10Z" fill="#8dc5e6" stroke="#4b94bf" /><path d="M5 2H22V26H5Z" fill="#a9d5ec" stroke="#4b94bf" />
        <path d="M1 2H18V25H1Z" fill="#c4dfef" stroke="#5e9fc4" />
        <circle cx="11" cy="13.5" r="9" fill="#ef7721" stroke="#fbd0a6" />
        <path d="M8 8L17 13.5L8 19Z" fill="#fff" />
      </Icon>
      <Icon w={30} h={30} c="-mt-px ml-[32px]">
        <circle cx="15" cy="15" r="14.5" fill="#fbcb22" />
        <path d="M2.4 8A14.5 14.5 0 0 1 27.8 8.5H15Z" fill="#df4436" />
        <path d="M2.4 8A14.5 14.5 0 0 0 14 29.5L21 18.5L9 18.5Z" fill="#2ca14f" />
        <path d="M2.4 8L8.8 18.8L15 8Z" fill="#df4436" />
        <circle cx="15" cy="15" r="7" fill="#fff" /><circle cx="15" cy="15" r="5.5" fill="#3f7fe8" />
      </Icon>
      <div className="ml-[17px] flex h-[39px] w-[60px] items-center justify-center rounded-[3px] border border-[#3d4654] bg-[radial-gradient(circle_at_30%_60%,#fff7d4,#fae391_55%,#efcb62)] pb-1 shadow-[inset_0_0_0_1px_#fff3c0]">
        <Icon w={32} h={31}>
          <path d="M2 3L5 1H29V29H2Z" fill="#dfeaf8" stroke="#26579c" />
          <path d="M2 3L20 2V21L2 22Z" fill="#f8fbff" />
          <text x="3.5" y="20" fontFamily="Liberation Sans" fontWeight="bold" fontSize="22" textLength="20" lengthAdjust="spacingAndGlyphs" fill="#1d4a92" stroke="#1d4a92" strokeWidth="0.8">W</text>
          <path d="M16 22L28 15L30 22L24 28Z" fill="#fff" stroke="#9db0cf" strokeWidth="0.6" />
          <path d="M6 24H15M6 26.5H15" stroke="#9db8de" />
        </Icon>
      </div>
      <div className="ml-auto flex h-full items-center">
        <Icon w={8} h={5}><path d="M0.5 4.5H7.5L4 0.5Z" fill="#fff" /></Icon>
        <Icon w={16} h={14} c="ml-3">
          <path d="M1 4.5H3.5L7.5 1V13L3.5 9.5H1Z" fill="#fff" stroke="#39475a" strokeWidth="0.7" />
          <path d="M9.5 5Q11 7 9.5 9M11.5 3.5Q14 7 11.5 10.5M13.5 2Q17 7 13.5 12" stroke="#fff" />
        </Icon>
        <Icon w={17} h={17} c="ml-2">
          <path d="M1.5 1V16" stroke="#fff" strokeWidth="1.6" />
          <path d="M3 2H8L9 3.5H13V9.5H8L7 8.5H3Z" fill="#fff" stroke="#45515f" strokeWidth="0.7" />
          <circle cx="11" cy="11.5" r="4.8" fill="#d5343a" stroke="#fff" strokeWidth="0.8" /><path d="M9 9.5L13 13.5M13 9.5L9 13.5" stroke="#fff" strokeWidth="1.4" />
        </Icon>
        <Icon w={17} h={16} c="ml-[7px]">
          <rect x="5" y="3.5" width="10.5" height="8.5" fill="#5d6f87" stroke="#fff" strokeWidth="1.4" />
          <path d="M7 14.5H14" stroke="#fff" strokeWidth="1.6" />
          <path d="M1 1V4.5H5.5V1M3.2 5V13.5H6" stroke="#fff" strokeWidth="1.3" />
        </Icon>
        <div className="ml-[11px] w-[60px] text-center text-[12px] leading-[17px] whitespace-nowrap text-white">
          <div className="tracking-[-0.2px]">7:16 AM</div>
          <div className="tracking-[-0.55px]">2/16/2023</div>
        </div>
        <div className="ml-1.5 h-[39px] w-[15px] border border-[#54667d] bg-linear-to-br from-[#b3becb] via-[#64758b] to-[#93a2b5]" />
      </div>
    </div>
  );
}

export default function App() {
  return (
    <div className="h-[1024px] w-[1280px] overflow-hidden font-['Noto_Sans',sans-serif]">
      <TitleBar />
      <Tabs />
      <Ribbon />
      <DocumentArea />
      <StatusBar />
      <Taskbar />
    </div>
  );
}
